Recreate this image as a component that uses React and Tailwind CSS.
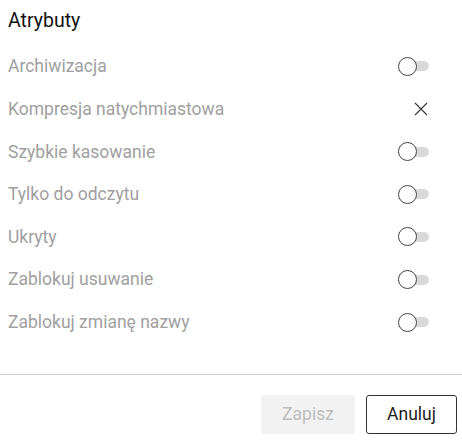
import React, { useState } from 'react';

const atrybuty = [
  { nazwa: 'Archiwizacja', typ: 'switch' },
  { nazwa: 'Kompresja natychmiastowa', typ: 'x' },
  { nazwa: 'Szybkie kasowanie', typ: 'switch' },
  { nazwa: 'Tylko do odczytu', typ: 'switch' },
  { nazwa: 'Ukryty', typ: 'switch' },
  { nazwa: 'Zablokuj usuwanie', typ: 'switch' },
  { nazwa: 'Zablokuj zmianę nazwy', typ: 'switch' },
];

function Przelacznik() {
  return (
    <div className="relative w-[31px] h-[19px] flex items-center">
      <div className="absolute left-[10px] w-[21px] h-[10px] rounded-full bg-[#d9d9d9]" />
      <div className="absolute left-0 w-[19px] h-[19px] rounded-full bg-white border border-[#444]" />
    </div>
  );
}

function Krzyzyk() {
  return (
    <svg width="14" height="14" viewBox="0 0 14 14" className="mr-[1px]">
      <path d="M1 1 L13 13 M13 1 L1 13" stroke="#333" strokeWidth="1.1" fill="none" />
    </svg>
  );
}

export default function App() {
  const [zmiany] = useState(false);

  return (
    <div className="w-[462px] h-[440px] bg-white flex flex-col" style={{ fontFamily: 'Roboto, "Liberation Sans", sans-serif' }}>
      <div className="px-2 pt-[9px] h-[45px]">
        <h3 className="text-[19.5px] leading-[24px] text-[#111]">Atrybuty</h3>
      </div>

      <div className="flex flex-col">
        {atrybuty.map((a) => (
          <div key={a.nazwa} className="h-[42.67px] flex items-center justify-between pl-2 pr-[33px]">
            <span className="text-[17.5px] text-[#a0a0a0]">{a.nazwa}</span>
            {a.typ === 'switch' ? <Przelacznik /> : <Krzyzyk />}
          </div>
        ))}
      </div>

      <div className="mt-[30px] border-t border-[#d0d0d0]" />

      <div className="flex justify-end gap-[11px] pt-[20px] pr-[5px]">
        <button
          disabled={!zmiany}
          className="w-[94px] h-[39px] rounded-[3px] bg-[#f2f2f2] text-[17.5px] text-[#bdbdbd]"
        >
          Zapisz
        </button>
        <button className="w-[91px] h-[39px] rounded-[3px] border border-[#333] bg-white text-[17.5px] text-[#222]">
          Anuluj
        </button>
      </div>
    </div>
  );
}
